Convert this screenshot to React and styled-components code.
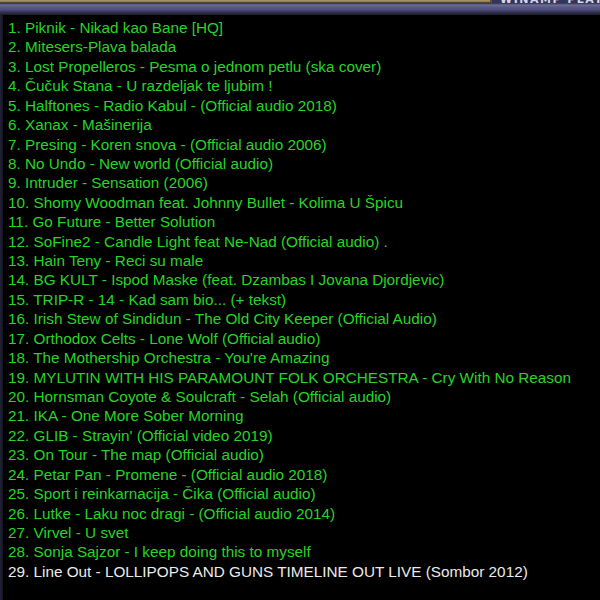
import React from 'react'
import styled, {createGlobalStyle} from 'styled-components'

const GlobalStyle = createGlobalStyle`
  html, body {
    margin: 0;
    padding: 0;
    background: #000;
  }
  body {
    font-family: "Liberation Sans", Arial, sans-serif;
  }
`

const Window = styled.div`
  width: 600px;
  height: 600px;
  overflow: hidden;
  display: flex;
  flex-direction: column;
  background: #000;
`
const TitleRow = styled.div`
  display: flex;
  height: 3px;
  background: #34345a;
`
const TanBar = styled.div`
  flex: 1;
  background: linear-gradient(to bottom, #a8976a 0%, #8c7b52 100%);
  border-right: 2px solid #5e5236;
  border-bottom: 1px solid #4f4530;
`
const TitleBox = styled.div`
  width: 100px;
  display: flex;
  align-items: flex-end;
  overflow: hidden;
  padding-left: 8px;
`
const TitleText = styled.span`
  font-family: "DejaVu Sans", sans-serif;
  font-weight: bold;
  font-size: 11px;
  line-height: 9px;
  letter-spacing: 1.5px;
  color: #d6d6e8;
  white-space: nowrap;
  transform: translateY(1px);
`
const Rail = styled.div`
  height: 12px;
  background: linear-gradient(to bottom,
    #2e2e48 0px, #6e6e98 2px, #5a5a88 4px, #4c4c7a 7px, #33334f 9px, #1c1c2c 12px);
`
const Body = styled.div`
  flex: 1;
  display: flex;
`
const LeftEdge = styled.div`
  width: 3px;
  background: linear-gradient(to right, #24243a, #14141f);
`
const List = styled.ol`
  list-style: none;
  margin: 0;
  padding: 3px 0 0 5px;
  flex: 1;
`
const Row = styled.li`
  font-size: 15.3px;
  line-height: 19.42px;
  white-space: nowrap;
  color: ${props => props.selected ? '#ebebeb' : '#27d427'};
`

const tracks = [
  'Piknik - Nikad kao Bane [HQ]',
  'Mitesers-Plava balada',
  'Lost Propelleros - Pesma o jednom petlu (ska cover)',
  'Čučuk Stana - U razdeljak te ljubim !',
  'Halftones - Radio Kabul - (Official audio 2018)',
  'Xanax - Mašinerija',
  'Presing - Koren snova - (Official audio 2006)',
  'No Undo - New world (Official audio)',
  'Intruder - Sensation (2006)',
  'Shomy Woodman feat. Johnny Bullet - Kolima U Špicu',
  'Go Future - Better Solution',
  'SoFine2 - Candle Light feat Ne-Nad (Official audio) .',
  'Hain Teny - Reci su male',
  'BG KULT - Ispod Maske (feat. Dzambas I Jovana Djordjevic)',
  'TRIP-R - 14 - Kad sam bio... (+ tekst)',
  'Irish Stew of Sindidun - The Old City Keeper (Official Audio)',
  'Orthodox Celts - Lone Wolf (Official audio)',
  'The Mothership Orchestra - You\'re Amazing',
  'MYLUTIN WITH HIS PARAMOUNT FOLK ORCHESTRA - Cry With No Reason',
  'Hornsman Coyote & Soulcraft - Selah (Official audio)',
  'IKA - One More Sober Morning',
  'GLIB - Strayin\' (Official video 2019)',
  'On Tour - The map (Official audio)',
  'Petar Pan - Promene - (Official audio 2018)',
  'Sport i reinkarnacija - Čika (Official audio)',
  'Lutke - Laku noc dragi - (Official audio 2014)',
  'Virvel - U svet',
  'Sonja Sajzor - I keep doing this to myself',
  'Line Out - LOLLIPOPS AND GUNS TIMELINE OUT LIVE (Sombor 2012)'
]

export default function App () {
  return <Window>
    <GlobalStyle />
    <TitleRow>
      <TanBar />
      <TitleBox>
        <TitleText>WINAMP PLAYLIST</TitleText>
      </TitleBox>
    </TitleRow>
    <Rail />
    <Body>
      <LeftEdge />
      <List>
        {
          tracks.map((t, i) =>
            <Row key={i} selected={i === tracks.length - 1}>{i + 1}. {t}</Row>
          )
        }
      </List>
    </Body>
  </Window>
}
